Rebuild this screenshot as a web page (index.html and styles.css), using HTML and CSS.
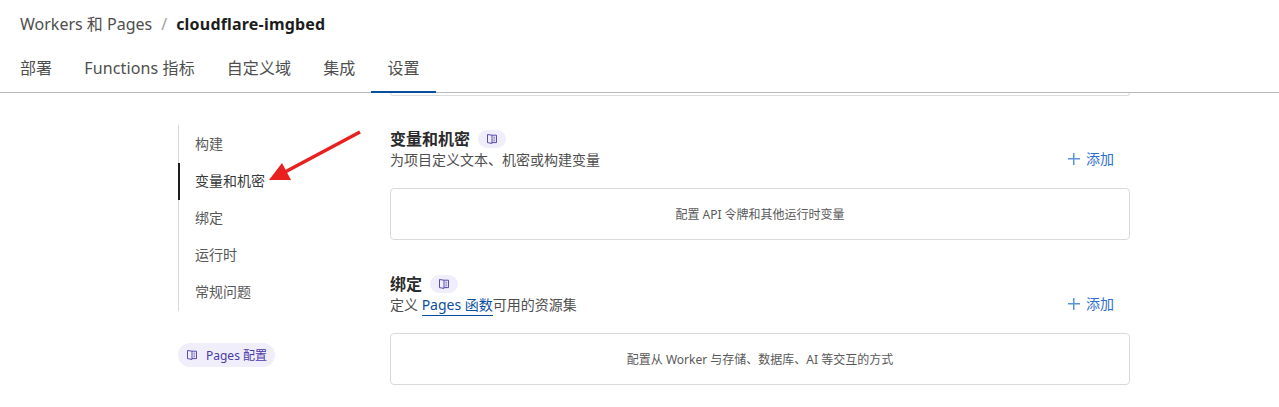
FILE: index.html
```html
<!DOCTYPE html>
<html lang="zh-CN">
<head>
    <meta charset="UTF-8">
    <meta name="viewport" content="width=device-width, initial-scale=1.0">
    <title>cloudflare-imgbed</title>
    <link rel="stylesheet" href="styles.css">
</head>
<body>
    <svg width="0" height="0" class="defs">
        <symbol id="book" viewBox="0 0 12 12">
            <path d="M6 2.200 L1.500 1.500 V9.600 L6 10.400 Z M6 2.200 H10.500 V9.600 H6" fill="none" stroke="currentColor" stroke-width="0.9"/>
            <path d="M7.400 4.200 H9.200 M7.400 6 H9.200 M7.400 7.800 H9.200" fill="none" stroke="currentColor" stroke-width="0.7"/>
        </symbol>
    </svg>

    <header class="header">
        <div class="crumbs">
            <span class="crumb">Workers 和 Pages</span>
            <span class="sep">/</span>
            <strong class="project">cloudflare-imgbed</strong>
        </div>
        <nav class="tabs">
            <a class="tab">部署</a>
            <a class="tab">Functions 指标</a>
            <a class="tab">自定义域</a>
            <a class="tab">集成</a>
            <a class="tab active">设置</a>
        </nav>
    </header>

    <div class="page">
        <aside class="side">
            <ul class="side-nav">
                <li class="side-item">构建</li>
                <li class="side-item active">变量和机密</li>
                <li class="side-item">绑定</li>
                <li class="side-item">运行时</li>
                <li class="side-item">常规问题</li>
            </ul>
            <a class="doc-pill">
                <svg class="book"><use href="#book"/></svg>
                <span>Pages 配置</span>
            </a>
        </aside>

        <main class="content">
            <div class="card-end"></div>

            <section class="block">
                <div class="block-head">
                    <div>
                        <h2 class="block-title">变量和机密
                            <span class="doc-badge"><svg class="book"><use href="#book"/></svg></span>
                        </h2>
                        <p class="block-desc">为项目定义文本、机密或构建变量</p>
                    </div>
                    <a class="add"><span class="plus"></span>添加</a>
                </div>
                <div class="empty">配置 API 令牌和其他运行时变量</div>
            </section>

            <section class="block">
                <div class="block-head">
                    <div>
                        <h2 class="block-title">绑定
                            <span class="doc-badge"><svg class="book"><use href="#book"/></svg></span>
                        </h2>
                        <p class="block-desc">定义 <a class="link">Pages 函数</a>可用的资源集</p>
                    </div>
                    <a class="add"><span class="plus"></span>添加</a>
                </div>
                <div class="empty">配置从 Worker 与存储、数据库、AI 等交互的方式</div>
            </section>
        </main>
    </div>

    <!-- annotation arrow on top of the screenshot -->
    <svg class="arrow" width="100" height="60" viewBox="0 0 100 60">
        <path d="M90 7 L15 47" stroke="#e8201f" stroke-width="3.500" fill="none"/>
        <path d="M-1 55 L12 38 L21 55 Z" fill="#e8201f"/>
    </svg>
</body>
</html>
```

FILE: styles.css
```css
* {
    box-sizing: border-box;
}
html, body {
    margin: 0;
    height: 407px;
    overflow: hidden;
}
body {
    font-family: "Noto Sans", "Noto Sans CJK SC", sans-serif;
    background: #fff;
    color: #36393a;
    position: relative;
}
.defs {
    position: absolute;
}

/* header */
.header {
    height: 93px;
    border-bottom: 1px solid #b9b9b9;
    padding: 0 0 0 4px;
}
.crumbs {
    height: 49px;
    padding: 13px 0 0 16px;
    font-size: 16px;
    line-height: 23px;
    display: flex;
    gap: 9px;
}
.crumb {
    color: #4e4e4e;
}
.sep {
    color: #a0a0a0;
}
.project {
    color: #1d1d1d;
    font-weight: 700;
    letter-spacing: 0.2px;
}
.tabs {
    display: flex;
    height: 43px;
}
.tab {
    padding: 8px 16px 0;
    font-size: 16px;
    line-height: 22px;
    letter-spacing: 0.12px;
    color: #4e4e4e;
    height: 44px;
}
.tab.active {
    border-bottom: 2px solid #0a4f9e;
}

/* page */
.page {
    display: flex;
    padding-left: 178px;
}
.side {
    width: 212px;
    padding-top: 32px;
}
.side-nav {
    list-style: none;
    margin: 0;
    padding: 1px 0 0;
    width: 160px;
    border-left: 1px solid #d9d9d9;
}
.side-item {
    height: 37px;
    line-height: 35px;
    padding-left: 16px;
    font-size: 14px;
    color: #595959;
}
.side-item.active {
    color: #36393a;
    border-left: 2px solid #1d1d1d;
    margin-left: -1px;
    padding-left: 15px;
}
.doc-pill {
    display: flex;
    align-items: center;
    gap: 8px;
    margin-top: 32px;
    height: 24px;
    width: 97px;
    padding-left: 8px;
    border-radius: 12px;
    background: #f0eefb;
    color: #4a3aa8;
    font-size: 12px;
    white-space: nowrap;
}
.book {
    width: 12px;
    height: 12px;
    flex: none;
}

/* main column */
.content {
    width: 740px;
}
.card-end {
    height: 3px;
    border: 1px solid #dcdcdc;
    border-top: 0;
    border-radius: 0 0 4px 4px;
}
.block {
    margin-top: 34px;
}
.block:nth-child(2) {
    margin-top: 33px;
}
.block-head {
    display: flex;
    justify-content: space-between;
    align-items: flex-end;
    height: 42px;
}
.block-title {
    margin: 0;
    font-size: 16px;
    line-height: 20px;
    font-weight: 700;
    color: #2b2b2b;
    display: flex;
    align-items: center;
    gap: 8px;
}
.doc-badge {
    display: inline-flex;
    align-items: center;
    justify-content: center;
    width: 28px;
    height: 18px;
    border-radius: 9px;
    background: #f0eefb;
    color: #4a3aa8;
}
.block-desc {
    margin: 0;
    font-size: 14px;
    line-height: 22px;
    color: #4e4e4e;
}
.link {
    color: #0a4f9e;
    border-bottom: 1px solid #0a4f9e;
    padding-bottom: 1px;
}
.add {
    display: flex;
    align-items: center;
    gap: 6px;
    color: #2f6fd0;
    font-size: 14px;
    line-height: 20px;
    margin: 0 16px 2px 0;
}
.plus {
    width: 12px;
    height: 12px;
    background:
        linear-gradient(#5b93dc, #5b93dc) center / 100% 1.500px no-repeat,
        linear-gradient(#5b93dc, #5b93dc) center / 1.500px 100% no-repeat;
}
.empty {
    margin-top: 17px;
    height: 52px;
    border: 1px solid #d9d9d9;
    border-radius: 4px;
    display: flex;
    align-items: center;
    justify-content: center;
    font-size: 12px;
    color: #595959;
}

.arrow {
    position: absolute;
    left: 270px;
    top: 125px;
    overflow: visible;
}
```
